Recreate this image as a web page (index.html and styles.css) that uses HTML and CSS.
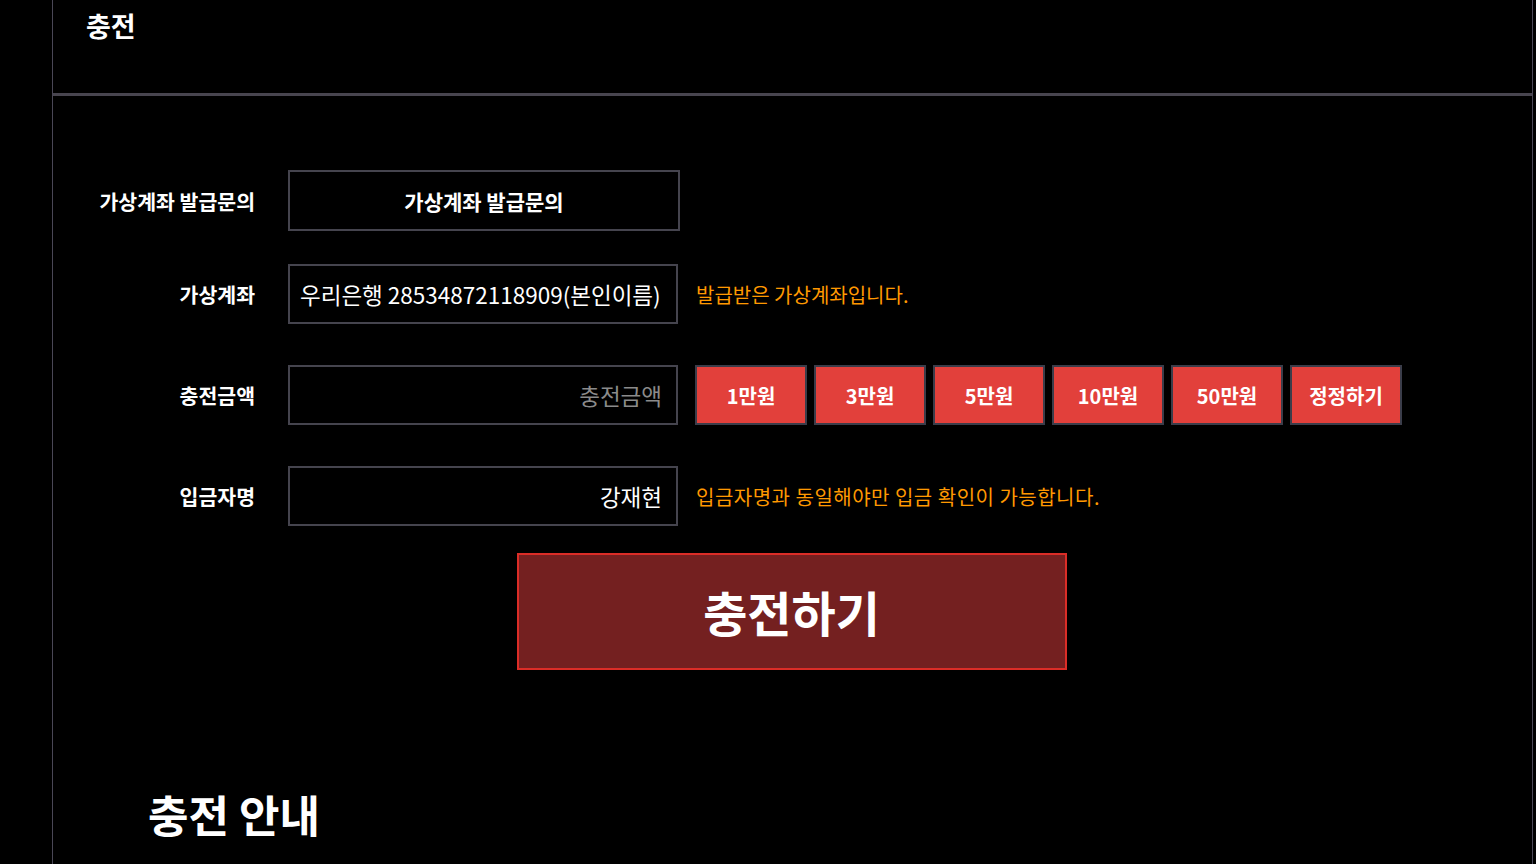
FILE: index.html
```html
<html>
    <head>
        <meta charset="utf-8">
        <link rel="stylesheet" href="styles.css">
    </head>

    <body>
        <div class="panel">
            <div class="panel-head">
                <h2 class="panel-title">충전</h2>
            </div>

            <form class="charge-form">
                <div class="form-row">
                    <label class="form-label">가상계좌 발급문의</label>
                    <button type="button" class="btn-inquiry">가상계좌 발급문의</button>
                </div>

                <div class="form-row">
                    <label class="form-label" for="account">가상계좌</label>
                    <input type="text" class="textbox" id="account" value="우리은행 28534872118909(본인이름)" readonly>
                    <span class="form-note">발급받은 가상계좌입니다.</span>
                </div>

                <div class="form-row">
                    <label class="form-label" for="amount">충전금액</label>
                    <input type="text" class="textbox textbox-right" id="amount" placeholder="충전금액">
                    <div class="amount-buttons">
                        <a class="btn-amount">1만원</a>
                        <a class="btn-amount">3만원</a>
                        <a class="btn-amount">5만원</a>
                        <a class="btn-amount">10만원</a>
                        <a class="btn-amount">50만원</a>
                        <a class="btn-amount">정정하기</a>
                    </div>
                </div>

                <div class="form-row">
                    <label class="form-label" for="depositor">입금자명</label>
                    <input type="text" class="textbox textbox-right" id="depositor" value="강재현">
                    <span class="form-note note-wide">입금자명과 동일해야만 입금 확인이 가능합니다.</span>
                </div>

                <div class="submit-row">
                    <a class="btn-submit">충전하기</a>
                </div>
            </form>

            <h3 class="guide-title">충전 안내</h3>
        </div>
    </body>
</html>
```

FILE: styles.css
```css
body {
    margin: 0;
    background-color: #000;
    color: #fff;
    font-family: "Noto Sans CJK KR", "Noto Sans", sans-serif;
}

.panel {
    margin-left: 52px;
    width: 1481px;
    min-height: 864px;
    box-sizing: border-box;
    border-left: 1px solid #4a4756;
    border-right: 1px solid #4a4756;
}

.panel-head {
    height: 93px;
    border-bottom: 3px solid #48454f;
    padding-left: 33px;
    box-sizing: content-box;
}

.panel-title {
    margin: 0;
    padding-top: 8px;
    font-size: 27px;
    font-weight: 700;
    line-height: 36px;
}

.charge-form {
    padding-top: 74px;
}

.form-row {
    display: flex;
    align-items: center;
    margin-bottom: 41px;
}

.form-row:first-child {
    margin-bottom: 33px;
}

.form-label {
    width: 202px;
    margin-right: 33px;
    text-align: right;
    font-size: 20.5px;
    font-weight: 700;
}

.btn-inquiry {
    width: 392px;
    height: 61px;
    background-color: #000;
    color: #fff;
    border: 2px solid #45444e;
    font-family: inherit;
    font-size: 21px;
    font-weight: 700;
    cursor: pointer;
}

.textbox {
    width: 390px;
    height: 60px;
    box-sizing: border-box;
    background-color: #000;
    color: #fff;
    border: 2px solid #45444e;
    padding: 0 10px;
    font-family: inherit;
    font-size: 22.5px;
    outline: none;
}

.textbox-right {
    text-align: right;
    padding-right: 14px;
}

.textbox::placeholder {
    color: #8b8b8b;
}

.form-note {
    margin-left: 18px;
    color: #ff9900;
    font-size: 20px;
}

.note-wide {
    letter-spacing: 0.5px;
}

.amount-buttons {
    display: flex;
    gap: 7px;
    margin-left: 17px;
}

.btn-amount {
    width: 112px;
    height: 60px;
    box-sizing: border-box;
    display: flex;
    align-items: center;
    justify-content: center;
    background-color: #e2403b;
    border: 2px solid #3b3d4a;
    font-size: 20px;
    font-weight: 700;
    cursor: pointer;
}

.submit-row {
    display: flex;
    justify-content: center;
    margin-top: -14px;
    padding-right: 2px;
}

.btn-submit {
    width: 550px;
    height: 117px;
    box-sizing: border-box;
    display: flex;
    align-items: center;
    justify-content: center;
    padding-bottom: 2px;
    background-color: #742020;
    border: 2px solid #dc2d27;
    font-size: 48px;
    font-weight: 700;
    cursor: pointer;
}

.guide-title {
    margin: 116px 0 0 95px;
    font-size: 44px;
    font-weight: 700;
    line-height: 56px;
}
```
